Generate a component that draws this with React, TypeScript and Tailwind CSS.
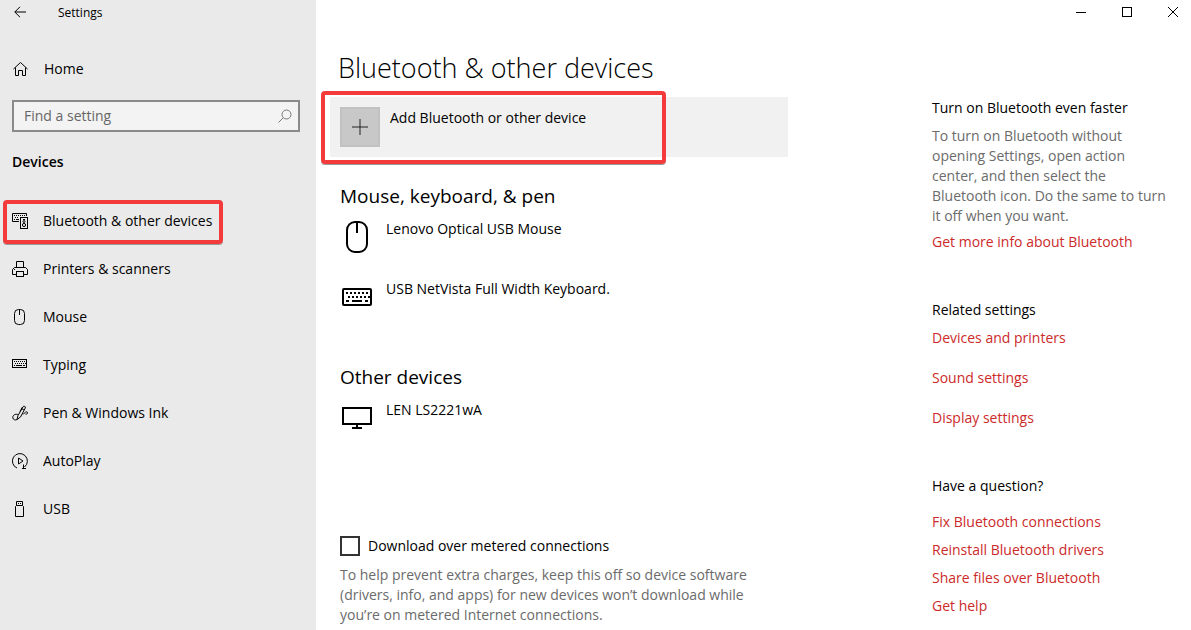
import type { ReactNode } from "react";

interface NavItem {
  label: string;
  icon: ReactNode;
  active?: boolean;
}

interface Device {
  name: string;
  icon: ReactNode;
}

const navItems: NavItem[] = [
  {
    label: "Bluetooth & other devices",
    active: true,
    icon: (
      <svg className="w-4 h-4" viewBox="0 0 16 16" fill="none" stroke="currentColor">
        <path d="M7 8.5H.5v-8h14V3M2 2.5h1m1 0h1m1 0h1m1 0h1m1 0h1m1 0h1M3 4.5h1m1 0h1M2 6.5h1m1 0h3" />
        <rect x="8.5" y="4.5" width="7" height="11" />
        <path d="M11 6.5h2" />
        <circle cx="12" cy="8.5" r="1" />
        <circle cx="12" cy="12" r="1.6" />
      </svg>
    ),
  },
  {
    label: "Printers & scanners",
    icon: (
      <svg className="w-4 h-4" viewBox="0 0 16 16" fill="none" stroke="currentColor">
        <path d="M4.5 6.5v-6h7v6M4.5 13.5h-4v-5l2-2h11l2 2v5h-4M2 8.5h1" />
        <rect x="4.5" y="10.5" width="7" height="5" />
      </svg>
    ),
  },
  {
    label: "Mouse",
    icon: (
      <svg className="w-4 h-4" viewBox="0 0 16 16" fill="none" stroke="currentColor">
        <rect x="2.5" y=".5" width="10" height="15" rx="4" />
        <path d="M7.5 1v5" />
      </svg>
    ),
  },
  {
    label: "Typing",
    icon: (
      <svg className="w-4 h-4" viewBox="0 0 16 16" fill="none" stroke="currentColor">
        <rect x=".5" y="2.5" width="14" height="8" />
        <path d="M2 4.5h1m1 0h1m1 0h1m1 0h1m1 0h1m1 0h1M3 6.5h1m1 0h1m1 0h1m1 0h1m1 0h1m1 0h1M2 8.5h1m1 0h6m1 0h2" />
      </svg>
    ),
  },
  {
    label: "Pen & Windows Ink",
    icon: (
      <svg className="w-4 h-4" viewBox="0 0 16 16" fill="none" stroke="currentColor">
        <path d="M5 14.5l1-4L11 1.8c.8-1.3 3-.3 2.3 1.2L8.5 12z" />
        <path d="M9.5 3.5l2.5 1.5M8 6.5L10.5 2M5.800 9.5C3 8.5.5 10.5.8 12.8c.3 2 2.7 2.7 4.2 1.7M11 9.5c2.5-3 4.5-3.5 4.5-1.5 0 1-1 1.300-2 1" />
      </svg>
    ),
  },
  {
    label: "AutoPlay",
    icon: (
      <svg className="w-4 h-4" viewBox="0 0 16 16" fill="none" stroke="currentColor">
        <path d="M5 15A7.5 7.5 0 1 1 12.5 14M11.5 11.5v3.5M10 15.5h4" />
        <path d="M6.5 5v6l4.5-3z" />
      </svg>
    ),
  },
  {
    label: "USB",
    icon: (
      <svg className="w-4 h-4" viewBox="0 0 16 16" fill="none" stroke="currentColor">
        <path d="M4.5 4.5v-4h6v4M6 2.5h1m1 0h1" />
        <path d="M3.5 15.5v-10l1-1h6l1 1v10z" />
      </svg>
    ),
  },
];

const inputDevices: Device[] = [
  {
    name: "Lenovo Optical USB Mouse",
    icon: (
      <svg className="w-[22px] h-8" viewBox="0 0 22 32" fill="none" stroke="currentColor" strokeWidth="2">
        <rect x="1" y="1" width="20" height="30" rx="8" />
        <path d="M11 1v11" />
      </svg>
    ),
  },
  {
    name: "USB NetVista Full Width Keyboard.",
    icon: (
      <svg className="w-[30px] h-[18px]" viewBox="0 0 30 18" fill="none" stroke="currentColor" strokeWidth="2">
        <rect x="1" y="1" width="28" height="16" rx="1" />
        <path d="M4 5h2m2 0h2m2 0h2m2 0h2m2 0h2m2 0h2M6 9h2m2 0h2m2 0h2m2 0h2m2 0h2m2 0h2M4 13h3m3 0h10m3 0h3" />
      </svg>
    ),
  },
];

const otherDevices: Device[] = [
  {
    name: "LEN LS2221wA",
    icon: (
      <svg className="w-[30px] h-[22px]" viewBox="0 0 30 22" fill="none" stroke="currentColor" strokeWidth="2">
        <rect x="1" y="1" width="28" height="16" />
        <path d="M15 17v4M10 21h10" />
      </svg>
    ),
  },
];

const relatedLinks = ["Devices and printers", "Sound settings", "Display settings"];

const helpLinks = [
  "Fix Bluetooth connections",
  "Reinstall Bluetooth drivers",
  "Share files over Bluetooth",
  "Get help",
];

function DeviceList({ devices }: { devices: Device[] }) {
  return (
    <ul className="mt-[9px] pl-0.5">
      {devices.map((device) => (
        <li key={device.name} className="flex h-[60px] gap-3.5">
          <span className="flex h-9 w-[30px] items-center justify-center">{device.icon}</span>
          <span>{device.name}</span>
        </li>
      ))}
    </ul>
  );
}

function SideLink({ children }: { children: ReactNode }) {
  return (
    <a href="#" className="block text-[#cc2a2a] hover:text-gray-500">
      {children}
    </a>
  );
}

function Sidebar() {
  return (
    <div className="w-[316px] shrink-0 bg-[#eaeaea]">
      <div className="flex h-6 items-center gap-8 pl-3.5">
        <button type="button" aria-label="Back">
          <svg className="h-3 w-3" viewBox="0 0 12 12" fill="none" stroke="currentColor">
            <path d="M12 6H.8M6 .8L.8 6 6 11.2" />
          </svg>
        </button>
        <span className="pt-0.5 text-xs">Settings</span>
      </div>

      <a href="#" className="mt-[21px] flex h-12 items-center gap-4 pl-3">
        <svg className="h-4 w-4" viewBox="0 0 16 16" fill="none" stroke="currentColor">
          <path d="M1.5 8L8.5 1.5 15.5 8M3.5 6.5v8h3v-5h4v5h3v-8" />
        </svg>
        Home
      </a>

      <div className="mt-[7px] mr-4 ml-3 flex h-8 items-center border-2 border-[#8a8a8a] bg-[#f3f3f3] pr-1.5">
        <input
          type="text"
          aria-label="Find a setting"
          placeholder="Find a setting"
          className="min-w-0 flex-1 bg-transparent pl-2.5 outline-none placeholder:text-[#666]"
        />
        <svg className="h-3.5 w-3.5 text-[#777]" viewBox="0 0 14 14" fill="none" stroke="currentColor">
          <circle cx="8.5" cy="5.5" r="4.5" />
          <path d="M5.2 8.8L.5 13.5" />
        </svg>
      </div>

      <h2 className="mt-5 pl-3 font-semibold">Devices</h2>

      <nav className="mt-[25px]">
        {navItems.map((item) => (
          <a key={item.label} href="#" className="relative flex h-12 items-center gap-[15px] pl-3">
            {item.icon}
            {item.label}
            {item.active && (
              <span className="pointer-events-none absolute top-[3px] left-[3px] h-11 w-[220px] rounded border-4 border-[#f33b3b] shadow-[0_1px_0_#999]" />
            )}
          </a>
        ))}
      </nav>
    </div>
  );
}

function WindowControls() {
  return (
    <div className="flex h-6 justify-end gap-2.5">
      <button type="button" aria-label="Minimize" className="flex w-9 items-center justify-center">
        <svg className="h-2.5 w-2.5" viewBox="0 0 10 10" fill="none" stroke="currentColor">
          <path d="M0 5.5h10" />
        </svg>
      </button>
      <button type="button" aria-label="Maximize" className="flex w-9 items-center justify-center">
        <svg className="h-2.5 w-2.5" viewBox="0 0 10 10" fill="none" stroke="currentColor">
          <rect x=".5" y=".5" width="9" height="9" />
        </svg>
      </button>
      <button type="button" aria-label="Close" className="flex w-9 items-center justify-center">
        <svg className="h-2.5 w-2.5" viewBox="0 0 10 10" fill="none" stroke="currentColor">
          <path d="M0 0l10 10M10 0L0 10" />
        </svg>
      </button>
    </div>
  );
}

export default function App() {
  return (
    <div className="flex min-h-screen bg-white font-['Open_Sans',sans-serif] text-sm leading-5 text-black">
      <Sidebar />

      <div className="min-w-0 flex-1">
        <WindowControls />

        <div className="flex justify-between">
          <main className="min-w-0 flex-1 pt-6 pl-3.5">
            <h1 className="pl-2 text-[27px] leading-10 font-light">Bluetooth &amp; other devices</h1>

            <div className="relative mt-[9px] max-w-[458px]">
              <button type="button" className="flex h-[60px] w-full items-start gap-2.5 bg-[#f1f1f1] p-2.5 text-left">
                <span className="flex h-10 w-10 items-center justify-center border-2 border-[#c2c2c2] bg-[#c8c8c8]">
                  <svg className="h-4 w-4" viewBox="0 0 16 16" fill="none" stroke="#222">
                    <path d="M8 0v16M0 8h16" />
                  </svg>
                </span>
                <span className="pt-px">Add Bluetooth or other device</span>
              </button>
              <span className="pointer-events-none absolute -top-1.5 -left-[9px] h-[73px] w-[345px] rounded border-4 border-[#f33b3b] shadow-[0_1px_0_#999]" />
            </div>

            <div className="pl-2.5">
              <h2 className="mt-[25px] text-[19px] leading-7">Mouse, keyboard, &amp; pen</h2>
              <DeviceList devices={inputDevices} />

              <h2 className="mt-6 text-[19px] leading-7">Other devices</h2>
              <DeviceList devices={otherDevices} />

              <label className="mt-[76px] flex items-center gap-2">
                <input type="checkbox" className="h-5 w-5 appearance-none border-2 border-[#333] bg-white checked:bg-[#cc2a2a]" />
                Download over metered connections
              </label>
              <p className="mt-[9px] max-w-[424px] text-[#6b6b6b]">
                To help prevent extra charges, keep this off so device software (drivers, info, and
                apps) for new devices won’t download while you’re on metered Internet connections.
              </p>
            </div>
          </main>

          <aside className="w-[259px] shrink-0 pt-[74px]">
            <h3>Turn on Bluetooth even faster</h3>
            <p className="mt-2 mb-1.5 max-w-60 text-[#6b6b6b]">
              To turn on Bluetooth without opening Settings, open action center, and then select the
              Bluetooth icon. Do the same to turn it off when you want.
            </p>
            <SideLink>Get more info about Bluetooth</SideLink>

            <h3 className="mt-12">Related settings</h3>
            <div className="mt-2 flex flex-col gap-5">
              {relatedLinks.map((link) => (
                <SideLink key={link}>{link}</SideLink>
              ))}
            </div>

            <h3 className="mt-12">Have a question?</h3>
            <div className="mt-4 flex flex-col gap-2">
              {helpLinks.map((link) => (
                <SideLink key={link}>{link}</SideLink>
              ))}
            </div>
          </aside>
        </div>
      </div>
    </div>
  );
}
